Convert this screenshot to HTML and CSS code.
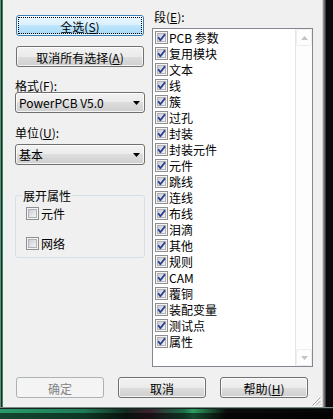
FILE: index.html
```html
<!DOCTYPE html>
<html lang="zh-CN">
<head>
<meta charset="utf-8">
<title>输出</title>
<link rel="stylesheet" href="styles.css">
</head>
<body>
<svg class="defs" aria-hidden="true">
  <defs>
    <linearGradient id="cbg" x1="0" y1="0" x2="1" y2="1">
      <stop offset="0" stop-color="#c9cdd3"/>
      <stop offset="1" stop-color="#f6f6f6"/>
    </linearGradient>
    <symbol id="cb-off" viewBox="0 0 13 13">
      <rect x="0.5" y="0.5" width="12" height="12" fill="#f4f4f4" stroke="#8e8f8f"/>
      <rect x="2.5" y="2.5" width="8" height="8" fill="url(#cbg)" stroke="#b0b4ba"/>
    </symbol>
    <symbol id="cb-on" viewBox="0 0 13 13">
      <rect x="0.5" y="0.5" width="12" height="12" fill="#f4f4f4" stroke="#8e8f8f"/>
      <rect x="2.5" y="2.5" width="8" height="8" fill="url(#cbg)" stroke="#b0b4ba"/>
      <path d="M3.2 6.2 L5.4 9.3 L10 3.2" fill="none" stroke="#2d3f8e" stroke-width="1.9" stroke-linejoin="round"/>
    </symbol>
  </defs>
</svg>
<div class="screen">
  <div class="main">
    <div class="frame-left"></div>
    <div class="client">
      <div class="top">
        <div class="left">
          <button class="btn btn-default"><span class="btn-text">全选(<u>S</u>)</span></button>
          <button class="btn btn-second"><span class="btn-text">取消所有选择(<u>A</u>)</span></button>
          <div class="label label-format">格式(<u>F</u>):</div>
          <div class="combo"><span>PowerPCB V5.0</span><svg class="arrow" viewBox="0 0 7 4"><polygon points="0,0 7,0 3.5,4" fill="#000"/></svg></div>
          <div class="label label-unit">单位(<u>U</u>):</div>
          <div class="combo combo-unit"><span>基本</span><svg class="arrow" viewBox="0 0 7 4"><polygon points="0,0 7,0 3.5,4" fill="#000"/></svg></div>
          <fieldset class="group">
            <legend>展开属性</legend>
            <div class="gitem gitem-first"><svg class="cb"><use href="#cb-off"/></svg><span>元件</span></div>
            <div class="gitem gitem-second"><svg class="cb"><use href="#cb-off"/></svg><span>网络</span></div>
          </fieldset>
        </div>
        <div class="right">
          <div class="label label-seg">段(<u>E</u>):</div>
          <div class="list">
            <div class="items">
              <div class="item"><svg class="cb"><use href="#cb-on"/></svg><span>PCB 参数</span></div>
              <div class="item"><svg class="cb"><use href="#cb-on"/></svg><span>复用模块</span></div>
              <div class="item"><svg class="cb"><use href="#cb-on"/></svg><span>文本</span></div>
              <div class="item"><svg class="cb"><use href="#cb-on"/></svg><span>线</span></div>
              <div class="item"><svg class="cb"><use href="#cb-on"/></svg><span>簇</span></div>
              <div class="item"><svg class="cb"><use href="#cb-on"/></svg><span>过孔</span></div>
              <div class="item"><svg class="cb"><use href="#cb-on"/></svg><span>封装</span></div>
              <div class="item"><svg class="cb"><use href="#cb-on"/></svg><span>封装元件</span></div>
              <div class="item"><svg class="cb"><use href="#cb-on"/></svg><span>元件</span></div>
              <div class="item"><svg class="cb"><use href="#cb-on"/></svg><span>跳线</span></div>
              <div class="item"><svg class="cb"><use href="#cb-on"/></svg><span>连线</span></div>
              <div class="item"><svg class="cb"><use href="#cb-on"/></svg><span>布线</span></div>
              <div class="item"><svg class="cb"><use href="#cb-on"/></svg><span>泪滴</span></div>
              <div class="item"><svg class="cb"><use href="#cb-on"/></svg><span>其他</span></div>
              <div class="item"><svg class="cb"><use href="#cb-on"/></svg><span>规则</span></div>
              <div class="item"><svg class="cb"><use href="#cb-on"/></svg><span>CAM</span></div>
              <div class="item"><svg class="cb"><use href="#cb-on"/></svg><span>覆铜</span></div>
              <div class="item"><svg class="cb"><use href="#cb-on"/></svg><span>装配变量</span></div>
              <div class="item"><svg class="cb"><use href="#cb-on"/></svg><span>测试点</span></div>
              <div class="item"><svg class="cb"><use href="#cb-on"/></svg><span>属性</span></div>
            </div>
            <div class="scroll">
              <div class="sbtn"><svg class="sarrow" viewBox="0 0 7 4"><polygon points="0,4 7,4 3.5,0" fill="#c4c4c4"/></svg></div>
              <div class="sbtn"><svg class="sarrow" viewBox="0 0 7 4"><polygon points="0,0 7,0 3.5,4" fill="#c4c4c4"/></svg></div>
            </div>
          </div>
        </div>
      </div>
      <div class="bottom-row">
        <div class="buttons">
          <button class="btn btn-disabled"><span class="btn-text">确定</span></button>
          <button class="btn"><span class="btn-text">取消</span></button>
          <button class="btn"><span class="btn-text">帮助(<u>H</u>)</span></button>
        </div>
        <svg class="grip" viewBox="0 0 12 12">
          <path d="M11.5 2.5 L2.5 11.5 M11.5 6 L6 11.5 M11.5 9.5 L9.5 11.5" stroke="#ffffff" stroke-width="1"/>
          <path d="M10.5 2.5 L2.5 10.5 M10.5 6 L6 10.5 M10.5 9.5 L9.5 10.5" stroke="#9a9a9a" stroke-width="1"/>
        </svg>
      </div>
    </div>
    <div class="frame-right"></div>
  </div>
  <div class="frame-bottom"></div>
</div>
</body>
</html>
```
FILE: styles.css
```css
* { box-sizing: border-box; }
html, body { margin: 0; padding: 0; }
body {
  width: 333px;
  height: 419px;
  overflow: hidden;
  font-family: "Noto Sans CJK SC", "Liberation Sans", sans-serif;
  font-size: 12px;
  line-height: 13px;
  color: #000;
  background: #0b0b0b;
}
u { text-decoration: underline; text-underline-offset: 1px; }

.defs { display: block; width: 0; height: 0; overflow: hidden; }

.screen { display: flex; flex-direction: column; width: 333px; height: 419px; }
.main { display: flex; height: 407px; }

.frame-left {
  width: 3px;
  background: linear-gradient(to right, #6b8c7d 0 1px, #12331f 1px 2px, #2e8a64 2px 3px);
}
.frame-right {
  width: 11px;
  background: linear-gradient(to right, #d2d2d2 0 1px, #8f8f8f 1px 2px, #686868 2px 3px, #3b3b3b 3px 4px, #0a0a0a 4px 100%);
}
.frame-bottom {
  height: 12px;
  background:
    linear-gradient(to bottom, #7d8c85 0 1px, #16261f 1px 2px, transparent 2px 6px, rgba(0,0,0,0.55) 6px 100%),
    linear-gradient(to right, #2a9a6c 0%, #1f7a55 25%, #14281e 38%, #3b2230 45%, #1d6a48 55%, #2aa060 58%, #0c0c0c 68%, #050505 100%);
}

.client {
  width: 319px;
  background: #f0f0f0;
  padding: 0 9px 0 12px;
  display: flex;
  flex-direction: column;
}

.top { display: flex; gap: 7px; }
.left { width: 130px; padding-top: 15px; display: flex; flex-direction: column; }
.right { width: 161px; display: flex; flex-direction: column; }

/* Buttons */
.btn {
  font: inherit;
  color: #000;
  height: 21px;
  padding: 0;
  border: 1px solid #707070;
  border-radius: 3px;
  background: linear-gradient(to bottom, #f2f2f2 0%, #ebebeb 50%, #dddddd 50%, #cfcfcf 100%);
  box-shadow: inset 0 0 0 1px rgba(255,255,255,0.75);
  display: flex;
  align-items: center;
  justify-content: center;
  line-height: 13px;
}
.left .btn { margin: 0 1px; }
.btn-default {
  border-color: #3c7fb1;
  background: linear-gradient(to bottom, #eaf6fd 0%, #d9f0fc 50%, #bee6fd 50%, #a7d9f5 100%);
  outline: 1px dotted #000;
  outline-offset: -3px;
}
.btn-second { margin-top: 10px !important; }
.btn-disabled {
  border-color: #adb2b5;
  background: #f4f4f4;
  color: #838383;
  box-shadow: none;
}
.btn-text { display: block; padding-top: 1px; }

/* Labels */
.label { height: 13px; white-space: nowrap; }
.label-format { margin-top: 12px; padding-left: 0; }
.label-unit { margin-top: 13px; }
.label-seg { margin-top: 10px; padding-left: 2px; }

/* Combo */
.combo {
  height: 21px;
  border: 1px solid #707070;
  border-radius: 3px;
  background: linear-gradient(to bottom, #f2f2f2 0%, #ebebeb 50%, #dddddd 50%, #cfcfcf 100%);
  box-shadow: inset 0 0 0 1px rgba(255,255,255,0.75);
  display: flex;
  align-items: center;
  justify-content: space-between;
  padding: 0 4px 0 3px;
  white-space: nowrap;
}
.combo-unit { margin-top: 5px; }
.arrow { width: 7px; height: 4px; display: block; margin-top: 1px; }

/* Group */
.group {
  margin: 24px 0 0 0;
  padding: 0 0 6px 10px;
  border: 1px solid #d5dfe5;
  border-radius: 3px;
  min-width: 0;
}
.group legend {
  margin-left: -4px;
  padding: 0 1px;
  line-height: 13px;
  height: 13px;
}
.gitem { display: flex; align-items: flex-start; height: 15px; line-height: 15px; gap: 2px; }
.gitem .cb { margin-top: 1px; }
.gitem-first { margin-top: 4px; }
.gitem-second { margin-top: 15px; }

.cb { width: 13px; height: 13px; display: block; flex: none; }

/* List */
.list {
  margin-top: 5px;
  height: 339px;
  border: 1px solid #828790;
  background: #fff;
  display: flex;
}
.items { flex: 1; padding: 0 0 0 2px; }
.item {
  display: flex;
  align-items: flex-start;
  height: 16px;
  line-height: 15px;
  gap: 1px;
  white-space: nowrap;
}
.item .cb { margin-top: 2px; }
.item span { padding-top: 1px; }

.scroll {
  width: 17px;
  border-left: 1px solid #e6e6e6;
  background: #fdfdfd;
  display: flex;
  flex-direction: column;
  justify-content: space-between;
}
.sbtn {
  height: 17px;
  display: flex;
  align-items: center;
  justify-content: center;
  border: 1px solid #eeeeee;
  border-radius: 2px;
}
.sarrow { width: 7px; height: 4px; display: block; }

/* Bottom */
.bottom-row {
  flex: 1;
  display: flex;
  align-items: flex-start;
  margin-top: 10px;
}
.buttons { display: flex; gap: 14px; padding-left: 1px; }
.buttons .btn { width: 88px; }
.grip {
  width: 12px;
  height: 12px;
  display: block;
  align-self: flex-end;
  margin-left: auto;
  margin-right: -9px;
}
```
